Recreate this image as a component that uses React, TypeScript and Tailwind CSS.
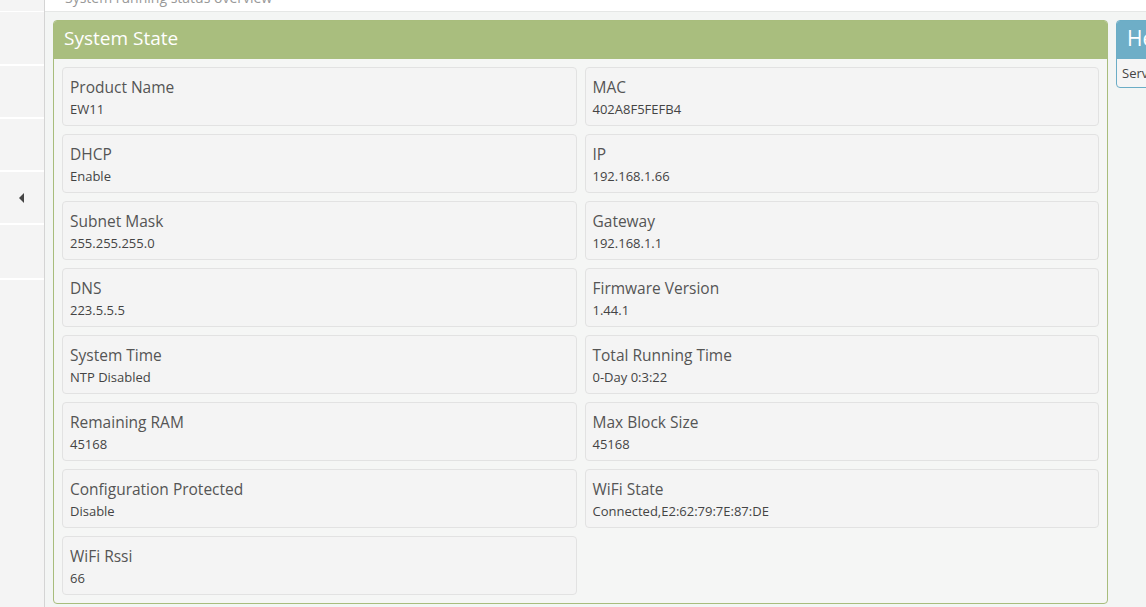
import React from "react";

const items: [string, string][] = [
  ["Product Name", "EW11"],
  ["MAC", "402A8F5FEFB4"],
  ["DHCP", "Enable"],
  ["IP", "192.168.1.66"],
  ["Subnet Mask", "255.255.255.0"],
  ["Gateway", "192.168.1.1"],
  ["DNS", "223.5.5.5"],
  ["Firmware Version", "1.44.1"],
  ["System Time", "NTP Disabled"],
  ["Total Running Time", "0-Day 0:3:22"],
  ["Remaining RAM", "45168"],
  ["Max Block Size", "45168"],
  ["Configuration Protected", "Disable"],
  ["WiFi State", "Connected,E2:62:79:7E:87:DE"],
  ["WiFi Rssi", "66"],
];

export default function App() {
  return (
    <div
      className="flex h-[607px] w-[1146px] overflow-hidden bg-[#f3f5f4] text-[#555]"
      style={{ fontFamily: '"Open Sans", "Noto Sans", sans-serif' }}
    >
      {/* sidebar */}
      <div className="flex w-[45px] shrink-0 flex-col border-r border-[#d4d4d4] bg-[#f4f4f4]">
        <div className="h-[12px] border-b border-white" />
        <div className="h-[54px] border-b-2 border-white" />
        <div className="h-[53px] border-b-2 border-white" />
        <div className="h-[53px] border-b-2 border-white" />
        <div className="flex h-[53px] items-center border-b-2 border-white pl-[19px]">
          <svg width="5" height="10" viewBox="0 0 5 10">
            <path d="M5 0 L0 5 L5 10 Z" fill="#444" />
          </svg>
        </div>
        <div className="h-[55px] border-b-2 border-white" />
      </div>

      {/* main */}
      <div className="flex min-w-0 flex-1 flex-col">
        <div className="relative h-[12px] shrink-0 overflow-hidden border-b border-[#e5e7e6] bg-white">
          <div className="absolute left-[20px] top-[-13px] text-[14px] text-[#999]">
            System running status overview
          </div>
        </div>
        <div className="flex gap-[8px] pl-[8px] pt-[8px]">
          {/* System State panel */}
          <div className="w-[1055px] shrink-0 overflow-hidden rounded-[4px] border border-[#a8bd7c] bg-[#f5f6f5]">
            <div className="flex h-[38px] items-center bg-[#a9be7e] px-[10px] pb-[4px] text-[19px] text-white">
              System State
            </div>
            <div className="grid grid-cols-2 gap-[8px] p-[8px]">
              {items.map(([k, v]) => (
                <div
                  key={k}
                  className="flex h-[59px] flex-col justify-center rounded-[4px] border border-[#e2e2e2] bg-[#f4f4f4] px-[7px] pt-[2px]"
                >
                  <div className="text-[15.5px] leading-[22px] text-[#555]">{k}</div>
                  <div className="text-[13px] leading-[22px] text-[#444]">{v}</div>
                </div>
              ))}
            </div>
          </div>
          {/* Help panel */}
          <div className="w-[200px] shrink-0 self-start overflow-hidden rounded-[4px] border border-[#6badc6] bg-[#f5f5f5]">
            <div className="flex h-[38px] items-center bg-[#6eaec7] px-[10px] pb-[2px] text-[21px] text-white">
              Help
            </div>
            <div className="px-[5px] py-[4px] text-[13px] leading-[20px] text-[#444]">
              Service status
            </div>
          </div>
        </div>
      </div>
    </div>
  );
}
